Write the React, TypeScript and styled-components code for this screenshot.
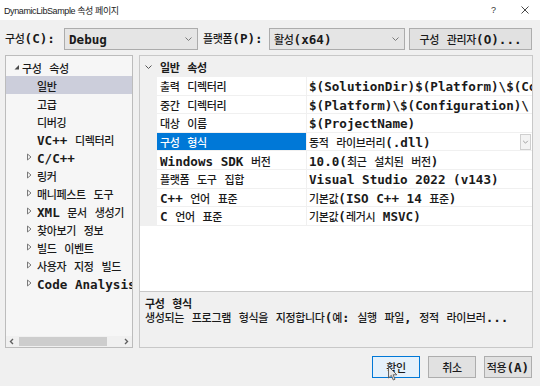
import React from 'react';
import styled, { createGlobalStyle } from 'styled-components';

const GlobalStyle = createGlobalStyle`
  html, body {
    margin: 0;
    padding: 0;
    background: #f0f0f0;
  }
  body {
    font-family: "DejaVu Sans Mono", "Noto Sans CJK KR", monospace;
  }
`;

// hangul runs get the light korean face, everything else the bold mono face
const HANGUL_RUN = /([\uAC00-\uD7A3]+(?: [\uAC00-\uD7A3]+)*)/;

const Han = styled.span<{ $bold?: boolean }>`
    font-family: "DejaVu Sans Mono", "Noto Sans CJK KR", monospace;
    font-size: 11px;
    letter-spacing: -0.35px;
    font-weight: ${({ $bold }) => ($bold ? 700 : 500)};
    word-spacing: 1.5px;
`;

const Lat = styled.span`
    font-family: "DejaVu Sans Mono", monospace;
    font-size: 12.6px;
    font-weight: 700;
`;

function Mixed({ text, bold }: { text: string; bold?: boolean }) {
    const parts = text.split(HANGUL_RUN);
    return (
        <>
            {parts.map((part, i) => {
                if (!part) return null;
                return i % 2 === 1
                    ? <Han key={i} $bold={bold}>{part}</Han>
                    : <Lat key={i}>{part}</Lat>;
            })}
        </>
    );
}

const Dialog = styled('div')`
    position: relative;
    width: 540px;
    height: 386px;
    overflow: hidden;
    display: flex;
    flex-direction: column;
    background: #f0f0f0;
    color: #1a1a1a;
`;

const TitleBar = styled('div')`
    height: 20px;
    display: flex;
    align-items: center;
    padding-left: 4px;
    background: #ffffff;
`;

const TitleText = styled('span')`
    flex: 1;
    font-family: "Liberation Sans", "Noto Sans CJK KR", sans-serif;
    font-size: 9px;
    letter-spacing: -0.4px;
    color: #222;
`;

const TitleButton = styled('div')`
    width: 31px;
    height: 20px;
    display: flex;
    align-items: center;
    justify-content: center;
    font-family: "Liberation Sans", sans-serif;
    font-size: 9px;
    color: #333;
`;

const Toolbar = styled('div')`
    display: flex;
    align-items: center;
    height: 22px;
    margin-top: 8px;
    padding-left: 5px;
`;

const FieldLabel = styled('span')<{ $width: number; $offset?: number }>`
    width: ${({ $width }) => $width}px;
    margin-left: ${({ $offset }) => $offset ?? 0}px;
    white-space: nowrap;
    line-height: 22px;
`;

const Combo = styled('div')<{ $width: number }>`
    width: ${({ $width }) => $width}px;
    height: 22px;
    box-sizing: border-box;
    display: flex;
    align-items: center;
    padding: 0 4px 0 4px;
    border: 1px solid #acacac;
    background: #e5e5e5;
    white-space: nowrap;
`;

const ComboArrow = styled('svg')`
    margin-left: auto;
    flex: none;
`;

const PushButton = styled('div')<{ $width: number; $focused?: boolean }>`
    width: ${({ $width }) => $width}px;
    height: 22px;
    box-sizing: border-box;
    display: flex;
    align-items: center;
    justify-content: center;
    white-space: nowrap;
    border: 1px solid ${({ $focused }) => ($focused ? '#0078d7' : '#adadad')};
    background: ${({ $focused }) => ($focused ? '#e5f1fb' : '#e1e1e1')};
`;

const ManagerButton = styled(PushButton)`
    margin-left: 4px;
`;

const Main = styled('div')`
    display: flex;
    gap: 6px;
    height: 293px;
    margin-top: 5px;
    padding: 0 7px 0 5px;
`;

const TreePanel = styled('div')`
    width: 128px;
    flex: none;
    box-sizing: border-box;
    display: flex;
    flex-direction: column;
    border: 1px solid #bcbcbc;
    background: #f6f6f6;
`;

const TreeList = styled('div')`
    flex: 1;
    overflow: hidden;
    padding-top: 2px;
`;

const TreeRow = styled('div')<{ $level: number; $selected?: boolean }>`
    height: 18px;
    display: flex;
    align-items: center;
    padding-left: ${({ $level }) => ($level === 0 ? 4 : 19)}px;
    white-space: nowrap;
    background: ${({ $selected }) => ($selected ? '#cccedb' : 'transparent')};
`;

const Expander = styled('svg')`
    flex: none;
`;

const HScroll = styled('div')`
    height: 11px;
    flex: none;
    display: flex;
    align-items: center;
    background: #f0f0f0;
`;

const ScrollArrow = styled('svg')`
    flex: none;
`;

const ScrollThumb = styled('div')`
    width: 88px;
    height: 9px;
    margin-left: 1px;
    background: #cdcdcd;
`;

const ScrollTrack = styled('div')`
    flex: 1;
`;

const RightColumn = styled('div')`
    flex: 1;
    display: flex;
    flex-direction: column;
    min-width: 0;
`;

const Grid = styled('div')`
    flex: 1;
    overflow: hidden;
    border: 1px solid #c8c8c8;
    background: #ffffff;
`;

const GridHeader = styled('div')`
    height: 21px;
    display: flex;
    align-items: center;
    background: #f0f0f0;
`;

const Gutter = styled('div')`
    width: 17px;
    flex: none;
    align-self: stretch;
    display: flex;
    align-items: center;
    justify-content: center;
    background: #f0f0f0;
`;

const HeaderTitle = styled('span')`
    padding-left: 3px;
    white-space: nowrap;
`;

const GridRow = styled('div')`
    height: 18.6px;
    box-sizing: border-box;
    display: flex;
    border-bottom: 1px solid #f0f0f0;
    white-space: nowrap;
`;

const NameCell = styled('div')<{ $selected?: boolean }>`
    width: 150px;
    flex: none;
    box-sizing: border-box;
    display: flex;
    align-items: center;
    padding-left: 3px;
    overflow: hidden;
    border-right: 1px solid #f0f0f0;
    background: ${({ $selected }) => ($selected ? '#0078d7' : '#ffffff')};
    color: ${({ $selected }) => ($selected ? '#ffffff' : '#1a1a1a')};
`;

const ValueCell = styled('div')`
    flex: 1;
    min-width: 0;
    display: flex;
    align-items: center;
    padding-left: 2px;
    overflow: hidden;
`;

const ValueText = styled('span')`
    flex: 1;
    overflow: hidden;
`;

const DropButton = styled('div')`
    width: 11px;
    height: 16px;
    flex: none;
    box-sizing: border-box;
    margin-right: 1px;
    display: flex;
    align-items: center;
    justify-content: center;
    border: 1px solid #cfcfcf;
    background: #f3f3f3;
`;

const Description = styled('div')`
    height: 56px;
    flex: none;
    box-sizing: border-box;
    padding: 4px 5px 0 5px;
    border: 1px solid #c8c8c8;
    border-top: none;
    background: #f0f0f0;
    line-height: 14px;
    white-space: nowrap;
    overflow: hidden;
`;

const DescLine = styled('div')`
    height: 14px;
`;

const Footer = styled('div')`
    display: flex;
    justify-content: flex-end;
    gap: 8px;
    margin-top: 8px;
    padding-right: 8px;
`;

const Cursor = styled('svg')`
    position: absolute;
    left: 388px;
    top: 366px;
`;

const treeItems: { label: string; level: number; open?: boolean; selected?: boolean; leaf?: boolean }[] = [
    { label: '구성 속성', level: 0, open: true },
    { label: '일반', level: 1, leaf: true, selected: true },
    { label: '고급', level: 1, leaf: true },
    { label: '디버깅', level: 1, leaf: true },
    { label: 'VC++ 디렉터리', level: 1, leaf: true },
    { label: 'C/C++', level: 1 },
    { label: '링커', level: 1 },
    { label: '매니페스트 도구', level: 1 },
    { label: 'XML 문서 생성기', level: 1 },
    { label: '찾아보기 정보', level: 1 },
    { label: '빌드 이벤트', level: 1 },
    { label: '사용자 지정 빌드', level: 1 },
    { label: 'Code Analysis', level: 1 },
];

const properties: { name: string; value: string; selected?: boolean }[] = [
    { name: '출력 디렉터리', value: '$(SolutionDir)$(Platform)\\$(Configuration)\\' },
    { name: '중간 디렉터리', value: '$(Platform)\\$(Configuration)\\' },
    { name: '대상 이름', value: '$(ProjectName)' },
    { name: '구성 형식', value: '동적 라이브러리(.dll)', selected: true },
    { name: 'Windows SDK 버전', value: '10.0(최근 설치된 버전)' },
    { name: '플랫폼 도구 집합', value: 'Visual Studio 2022 (v143)' },
    { name: 'C++ 언어 표준', value: '기본값(ISO C++ 14 표준)' },
    { name: 'C 언어 표준', value: '기본값(레거시 MSVC)' },
];

function ChevronDown({ size = 9, color = '#707070' }: { size?: number; color?: string }) {
    return (
        <svg width={size} height={6} viewBox="0 0 9 6">
            <polyline points="1.5,1.5 4.5,4.5 7.5,1.5" fill="none" stroke={color} strokeWidth="1" />
        </svg>
    );
}

function TreeExpander({ open, leaf }: { open?: boolean; leaf?: boolean }) {
    return (
        <Expander width={12} height={12} viewBox="0 0 12 12">
            {leaf ? null : open ? (
                <polygon points="9,4 9,8.5 4.5,8.5" fill="#4a4a4a" />
            ) : (
                <polygon points="2.5,3 6,6 2.5,9" fill="none" stroke="#7a7a7a" strokeWidth="1" />
            )}
        </Expander>
    );
}

export default function App() {
    return (
        <>
            <GlobalStyle />
            <Dialog>
                <TitleBar>
                    <TitleText>DynamicLibSample 속성 페이지</TitleText>
                    <TitleButton>?</TitleButton>
                    <TitleButton>
                        <svg width="8" height="8" viewBox="0 0 8 8">
                            <path d="M0.5 0.5 L7.5 7.5 M7.5 0.5 L0.5 7.5" stroke="#333" strokeWidth="0.9" />
                        </svg>
                    </TitleButton>
                </TitleBar>

                <Toolbar>
                    <FieldLabel $width={59}><Mixed text="구성(C):" /></FieldLabel>
                    <Combo $width={134}>
                        <Mixed text="Debug" />
                        <ComboArrow width={9} height={6} viewBox="0 0 9 6">
                            <polyline points="1.5,1.5 4.5,4.5 7.5,1.5" fill="none" stroke="#7a7a7a" strokeWidth="1" />
                        </ComboArrow>
                    </Combo>
                    <FieldLabel $width={66} $offset={5}><Mixed text="플랫폼(P):" /></FieldLabel>
                    <Combo $width={136}>
                        <Mixed text="활성(x64)" />
                        <ComboArrow width={9} height={6} viewBox="0 0 9 6">
                            <polyline points="1.5,1.5 4.5,4.5 7.5,1.5" fill="none" stroke="#7a7a7a" strokeWidth="1" />
                        </ComboArrow>
                    </Combo>
                    <ManagerButton $width={123}><Mixed text="구성 관리자(O)..." /></ManagerButton>
                </Toolbar>

                <Main>
                    <TreePanel>
                        <TreeList>
                            {treeItems.map((item) => (
                                <TreeRow key={item.label} $level={item.level} $selected={item.selected}>
                                    <TreeExpander open={item.open} leaf={item.leaf} />
                                    <span><Mixed text={item.label} /></span>
                                </TreeRow>
                            ))}
                        </TreeList>
                        <HScroll>
                            <ScrollArrow width={12} height={11} viewBox="0 0 12 11">
                                <polyline points="7,3 4.5,5.5 7,8" fill="none" stroke="#606060" strokeWidth="1.4" />
                            </ScrollArrow>
                            <ScrollThumb />
                            <ScrollTrack />
                            <ScrollArrow width={12} height={11} viewBox="0 0 12 11">
                                <polyline points="5,3 7.5,5.5 5,8" fill="none" stroke="#606060" strokeWidth="1.4" />
                            </ScrollArrow>
                        </HScroll>
                    </TreePanel>

                    <RightColumn>
                        <Grid>
                            <GridHeader>
                                <Gutter><ChevronDown color="#555" /></Gutter>
                                <HeaderTitle><Mixed text="일반 속성" bold /></HeaderTitle>
                            </GridHeader>
                            {properties.map((p) => (
                                <GridRow key={p.name}>
                                    <Gutter />
                                    <NameCell $selected={p.selected}><span><Mixed text={p.name} /></span></NameCell>
                                    <ValueCell>
                                        <ValueText><Mixed text={p.value} /></ValueText>
                                        {p.selected && (
                                            <DropButton><ChevronDown size={7} color="#888" /></DropButton>
                                        )}
                                    </ValueCell>
                                </GridRow>
                            ))}
                        </Grid>
                        <Description>
                            <DescLine><Mixed text="구성 형식" bold /></DescLine>
                            <DescLine><Mixed text="생성되는 프로그램 형식을 지정합니다(예: 실행 파일, 정적 라이브러..." /></DescLine>
                        </Description>
                    </RightColumn>
                </Main>

                <Footer>
                    <PushButton $width={48} $focused><Mixed text="확인" /></PushButton>
                    <PushButton $width={48}><Mixed text="취소" /></PushButton>
                    <PushButton $width={48}><Mixed text="적용(A)" /></PushButton>
                </Footer>

                <Cursor width={10} height={16} viewBox="0 0 10 16">
                    <path d="M0.5 0.5 L0.5 12 L3.3 9.4 L5.3 14 L7 13.2 L5.1 8.8 L8.8 8.8 Z" fill="#e8e8e8" stroke="#555" strokeWidth="0.9" />
                </Cursor>
            </Dialog>
        </>
    );
}
